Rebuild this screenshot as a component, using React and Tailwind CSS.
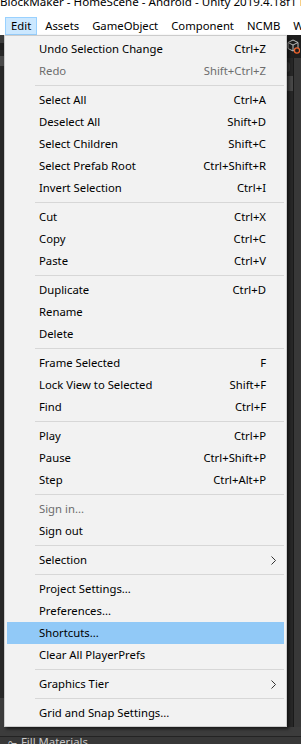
import React from "react";

const SEP = "sep";
const items = [
  { l: "Undo Selection Change", s: "Ctrl+Z" },
  { l: "Redo", s: "Shift+Ctrl+Z", d: true },
  SEP,
  { l: "Select All", s: "Ctrl+A" },
  { l: "Deselect All", s: "Shift+D" },
  { l: "Select Children", s: "Shift+C" },
  { l: "Select Prefab Root", s: "Ctrl+Shift+R" },
  { l: "Invert Selection", s: "Ctrl+I" },
  SEP,
  { l: "Cut", s: "Ctrl+X" },
  { l: "Copy", s: "Ctrl+C" },
  { l: "Paste", s: "Ctrl+V" },
  SEP,
  { l: "Duplicate", s: "Ctrl+D" },
  { l: "Rename" },
  { l: "Delete" },
  SEP,
  { l: "Frame Selected", s: "F" },
  { l: "Lock View to Selected", s: "Shift+F" },
  { l: "Find", s: "Ctrl+F" },
  SEP,
  { l: "Play", s: "Ctrl+P" },
  { l: "Pause", s: "Ctrl+Shift+P" },
  { l: "Step", s: "Ctrl+Alt+P" },
  SEP,
  { l: "Sign in...", d: true },
  { l: "Sign out" },
  SEP,
  { l: "Selection", sub: true },
  SEP,
  { l: "Project Settings..." },
  { l: "Preferences..." },
  { l: "Shortcuts...", h: true },
  { l: "Clear All PlayerPrefs" },
  SEP,
  { l: "Graphics Tier", sub: true },
  SEP,
  { l: "Grid and Snap Settings..." },
];

function Chevron() {
  return (
    <svg width="5" height="9" viewBox="0 0 5 9" className="block">
      <path d="M0.5 0.5 L4.5 4.5 L0.5 8.5" fill="none" stroke="#333" strokeWidth="1" />
    </svg>
  );
}

function CubeIcon() {
  return (
    <svg width="13" height="15" viewBox="0 0 13 15" className="block">
      <path d="M6 1 L11 3.5 L11 9.5 L6 12 L1 9.5 L1 3.5 Z" fill="none" stroke="#bdbdbd" strokeWidth="1" />
      <path d="M1 3.5 L6 6 L11 3.5 M6 6 L6 12" fill="none" stroke="#bdbdbd" strokeWidth="1" />
      <circle cx="10" cy="11.5" r="2.6" fill="#1e1e1e" stroke="#f0642d" strokeWidth="1.3" />
    </svg>
  );
}

export default function App() {
  const font = { fontFamily: '"Noto Sans", "Open Sans", sans-serif' };
  return (
    <div
      className="relative w-[301px] h-[744px] overflow-hidden bg-[#383838] text-[11.3px]"
      style={font}
    >
      {/* title bar */}
      <div className="h-[16px] bg-white overflow-hidden">
        <div className="-mt-[6px] whitespace-nowrap leading-[16px] text-black text-[11.6px]">
          BlockMaker - HomeScene - Android - Unity 2019.4.18f1 Personal &lt;DX11&gt;
        </div>
      </div>
      {/* menu bar */}
      <div className="h-[19px] bg-white flex items-start pl-[5px] whitespace-nowrap text-black">
        <div className="mt-[1px] h-[18px] px-[5px] flex items-center bg-[#cce8ff] border border-[#99d1ff]">Edit</div>
        <div className="mt-[1px] h-[18px] px-[6.5px] ml-[1.5px] flex items-center">Assets</div>
        <div className="mt-[1px] h-[18px] px-[6.5px] flex items-center">GameObject</div>
        <div className="mt-[1px] h-[18px] px-[6.5px] flex items-center">Component</div>
        <div className="mt-[1px] h-[18px] px-[6.5px] flex items-center">NCMB</div>
        <div className="mt-[1px] h-[18px] px-[6.5px] flex items-center">Window</div>
      </div>

      {/* editor background */}
      <div className="h-[709px] flex flex-col">
        <div className="flex-1 flex">
          {/* left panel */}
          <div className="w-[150px] flex flex-col">
            <div className="h-[8px] bg-[#3c3c3c]" />
            <div className="h-[7px] bg-[#1e1e1e]" />
            <div className="h-[6px] bg-[#282828]" />
            <div className="h-[10px] bg-[#4a4a4a]" />
            <div className="flex-1 bg-[#282828]" />
            <div className="h-[29px] bg-[#3c3c3c]" />
          </div>
          {/* right panel */}
          <div className="flex-1 flex flex-col">
            <div className="h-[23px] bg-[#1e1e1e] flex items-center justify-end pr-[1px]">
              <CubeIcon />
            </div>
            <div className="flex-1 flex">
              <div className="flex-1 bg-[#383838]" />
              <div className="w-[6px] bg-[#282828] flex flex-col pt-[4px] gap-[4px]">
                <div className="h-[10px] w-[3px] rounded-r-[3px] bg-[#3c3c3c]" />
                <div className="h-[15px] bg-[#484848]" />
              </div>
              <div className="w-[1px] bg-[#1a1a1a]" />
              <div className="w-[7px] bg-[#383838]" />
            </div>
          </div>
        </div>
        <div className="h-[10px] bg-[#3c3c3c] border-b border-[#232323]" />
        <div className="h-[7px] bg-[#383838] overflow-hidden flex items-start pl-[8px] text-[#c8c8c8]">
          <div className="mt-[-2px] flex items-center gap-[4px] whitespace-nowrap leading-[14px]">
            <span>⟜</span>
            <span>Fill Materials</span>
          </div>
        </div>
      </div>

      {/* dropdown menu */}
      <div className="absolute left-[4px] top-[35px] w-[283px] bg-[#f2f2f2] border border-[#cccccc] py-[2px] shadow-[2px_2px_3px_rgba(0,0,0,0.6)] text-black">
        {items.map((it, i) =>
          it === SEP ? (
            <div key={i} className="h-[7px] flex items-center pl-[30px] pr-[2px]">
              <div className="h-[1px] w-full bg-[#d7d7d7]" />
            </div>
          ) : (
            <div
              key={i}
              className={
                "h-[22px] mx-[2px] pl-[32px] flex items-center whitespace-nowrap " +
                (it.h ? "bg-[#91c9f7] " : "") +
                (it.d ? "text-[#6d6d6d]" : "text-black")
              }
            >
              <span className="flex-1">{it.l}</span>
              {it.s && <span>{it.s}</span>}
              <span className="w-[18px] flex items-center pl-[5px]">{it.sub && <Chevron />}</span>
            </div>
          )
        )}
      </div>
    </div>
  );
}
